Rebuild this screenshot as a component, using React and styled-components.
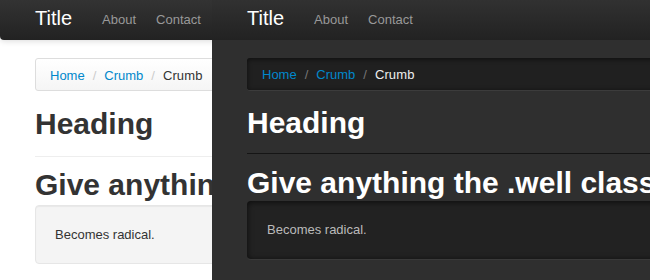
import styled, { createGlobalStyle } from 'styled-components';

const GlobalStyle = createGlobalStyle`
    html, body {
        margin: 0;
        padding: 0;
        background: #fff;
        overflow: hidden;
    }
    * {
        box-sizing: border-box;
    }
`;

const Preview = ({ dark }) => {
    return (
        <Page $dark={dark}>
            <Navbar $dark={dark}>
                <Brand>Title</Brand>
                <NavLink>About</NavLink>
                <NavLink>Contact</NavLink>
            </Navbar>
            <Container>
                <Breadcrumb $dark={dark}>
                    <Crumb href="#">Home</Crumb>
                    <Divider $dark={dark}>/</Divider>
                    <Crumb href="#">Crumb</Crumb>
                    <Divider $dark={dark}>/</Divider>
                    <Active $dark={dark}>Crumb</Active>
                </Breadcrumb>
                <PageHeader $dark={dark}>
                    <Heading $dark={dark}>Heading</Heading>
                </PageHeader>
                <Heading $dark={dark}>Give anything the .well class</Heading>
                <Well $dark={dark}>Becomes radical.</Well>
            </Container>
        </Page>
    )
}

const App = () => {
    return (
        <>
            <GlobalStyle />
            <Screen>
                <Pane $width="212px">
                    <Preview />
                </Pane>
                <Pane $grow>
                    <Preview dark />
                </Pane>
            </Screen>
        </>
    )
}

const Screen = styled.div`
    display: flex;
    width: 650px;
    height: 280px;
    overflow: hidden;
    font-family: "Liberation Sans", Arial, Helvetica, sans-serif;
`;

const Pane = styled.div`
    flex: ${p => p.$grow ? '1 1 auto' : '0 0 auto'};
    width: ${p => p.$width || 'auto'};
    min-width: 0;
    height: 100%;
    overflow: hidden;
`;

const Page = styled.div`
    width: 700px;
    height: 100%;
    background: ${p => p.$dark ? '#2f2f2f' : '#fff'};
    color: ${p => p.$dark ? '#ccc' : '#333'};
`;

const Navbar = styled.div`
    height: 40px;
    display: flex;
    align-items: flex-start;
    padding-left: 35px;
    background: linear-gradient(to bottom, ${p => p.$dark ? '#313131, #222' : '#333, #222'});
    border-radius: ${p => p.$dark ? '0' : '0 0 4px 4px'};
    box-shadow: ${p => p.$dark ? 'none' : '0 1px 6px rgba(0,0,0,0.15)'};
`;

const Brand = styled.span`
    font-size: 20px;
    line-height: 1;
    padding: 8px 20px 12px 0;
    color: #fff;
`;

const NavLink = styled.span`
    font-size: 13px;
    line-height: 19px;
    padding: 10px 10px 11px;
    color: #999;
`;

const Container = styled.div`
    padding: 18px 35px 0;
`;

const Breadcrumb = styled.div`
    height: 33px;
    padding: 8px 14px 6px;
    font-size: 13px;
    line-height: 18px;
    border-radius: 3px;
    ${p => p.$dark ? `
        background: #202020;
        border-bottom: 1px solid #3c3c3c;
        box-shadow: inset 0 1px 5px rgba(0,0,0,0.6);
        padding-left: 15px;
    ` : `
        background: linear-gradient(to bottom, #fff, #f5f5f5);
        border: 1px solid #ddd;
        box-shadow: inset 0 1px 0 #fff;
    `}
`;

const Crumb = styled.a`
    color: #0088cc;
    text-decoration: none;
`;

const Divider = styled.span`
    padding: 0 8px;
    color: ${p => p.$dark ? '#777' : '#ccc'};
`;

const Active = styled.span`
    color: ${p => p.$dark ? '#eee' : '#333'};
    letter-spacing: 0.1px;
`;

const PageHeader = styled.div`
    margin-top: ${p => p.$dark ? '14px' : '15px'};
    padding-bottom: ${p => p.$dark ? '12px' : '14px'};
    border-bottom: 1px solid ${p => p.$dark ? '#151515' : '#eee'};
    margin-bottom: ${p => p.$dark ? '11px' : '10px'};
`;

const Heading = styled.h1`
    margin: 0;
    font-size: 30px;
    line-height: 36px;
    font-weight: bold;
    white-space: nowrap;
    color: ${p => p.$dark ? '#fff' : '#333'};
`;

const Well = styled.div`
    margin-top: ${p => p.$dark ? '0' : '2px'};
    height: 59px;
    padding: 20px 19px 18px;
    font-size: 13px;
    line-height: 18px;
    border-radius: 4px;
    ${p => p.$dark ? `
        background: #222;
        color: #bbb;
        border-bottom: 1px solid #3a3a3a;
        box-shadow: inset 0 1px 6px rgba(0,0,0,0.7);
        padding-left: 20px;
    ` : `
        background: #f4f4f4;
        color: #333;
        border: 1px solid #e6e6e6;
        box-shadow: inset 0 1px 1px rgba(0,0,0,0.05);
    `}
`;

export default App;
